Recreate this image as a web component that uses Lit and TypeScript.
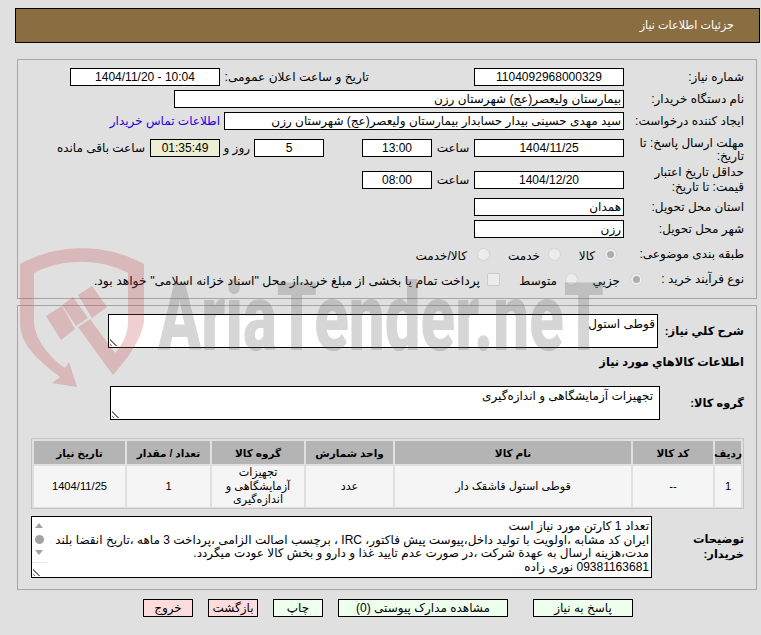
import { LitElement, html, css } from "lit";
import { customElement } from "lit/decorators.js";

const cols = [
  { t: "ردیف", v: html`1` },
  { t: "کد کالا", v: html`--` },
  { t: "نام کالا", v: html`قوطی استول قاشقک دار` },
  { t: "واحد شمارش", v: html`عدد` },
  { t: "گروه کالا", v: html`تجهیزات<br />آزمایشگاهی و<br />اندازه‌گیری` },
  { t: "تعداد / مقدار", v: html`1` },
  { t: "تاریخ نیاز", v: html`1404/11/25` },
];

@customElement("app-root")
export class AppRoot extends LitElement {
  static styles = css`
    :host {
      display: block;
      position: relative;
      width: 761px;
      height: 635px;
      overflow: hidden;
      background: #e0e0e0;
      font-family: "Liberation Sans", "DejaVu Sans", Tahoma, sans-serif;
      font-size: 12px;
      color: #000;
    }
    .page {
      direction: rtl;
      display: flex;
      flex-direction: column;
      padding: 8px 1px 0 15px;
    }
    .header {
      height: 33px;
      border: 1px solid #000;
      background: #8b6d42;
      color: #fff;
      display: flex;
      align-items: center;
      padding-right: 25px;
      font-size: 11.2px;
    }
    .panel {
      border: 1px solid #a6a6a6;
      margin: 0 3px 0 2px;
      padding: 8px 12px 0 0;
      box-sizing: border-box;
    }
    .p1 { margin-top: 16px; height: 240px; }
    .p2 { margin-top: 6px; height: 285px; }
    .row { display: flex; align-items: center; height: 18px; margin-bottom: 4px; }
    .lab { width: 120px; flex: none; line-height: 15px; white-space: nowrap; }
    .box {
      box-sizing: border-box;
      height: 18px;
      border: 1px solid #000;
      background: #fff;
      display: flex;
      align-items: center;
      padding: 0 2px;
      flex: none;
    }
    .c { justify-content: center; }
    .w150 { width: 150px; }
    .w70 { width: 70px; }
    .w450 { width: 450px; }
    .w400 { width: 400px; }
    .txt { white-space: nowrap; flex: none; }
    .pub-lab { width: 145px; margin: 0 105px 0 4px; font-size: 12.2px; }
    .ltr { direction: ltr; }
    .link { color: #2200dd; margin-right: 4px; white-space: nowrap; }
    .timer { background: #eeeed2; }
    .hour { width: 42px; text-align: center; }
    .gap38 { width: 38px; flex: none; }
    .days { width: 30px; margin-right: 4px; }
    .remain { margin-right: 5px; }
    .r4 { margin-top: 9px; margin-bottom: 14px; }
    .r4 .lab { line-height: 13px; margin-top: 3px; }
    .r5 { margin-bottom: 9px; }
    .r8 { margin-top: 7px; margin-bottom: 7px; }
    .opt { display: flex; align-items: center; flex: none; white-space: nowrap; }
    .opt span + span { margin-top: 3px; }
    .o8a { width: 56px; margin-right: 7px; }
    .o8b { width: 71px; }
    .o9a { width: 65px; margin-right: -19px; }
    .o9b { width: 78px; }
    .g7 { margin-right: 7px; font-size: 12.4px; }
    .g8 { margin-right: 8px; }
    .g9 { margin-right: 9px; }
    .g10 { margin-right: 10px; }
    .radio {
      flex: none;
      width: 13px;
      height: 13px;
      border-radius: 50%;
      box-sizing: border-box;
      border: 1px solid #d4d4d4;
      background: #ececec;
      display: flex;
      align-items: center;
      justify-content: center;
    }
    .radio.on::after {
      content: "";
      width: 7px;
      height: 7px;
      border-radius: 50%;
      background: #adadad;
    }
    .check {
      flex: none;
      width: 13px;
      height: 13px;
      box-sizing: border-box;
      border: 1px solid #cbcbcb;
      background: #ececec;
      border-radius: 2px;
    }
    .ta {
      box-sizing: border-box;
      border: 1px solid #000;
      background: #fff;
      position: relative;
      padding: 2px;
      width: 550px;
      height: 34px;
      flex: none;
    }
    .ta2 { padding-right: 6px; }
    .grip {
      position: absolute;
      left: 1px;
      bottom: 1px;
      width: 8px;
      height: 8px;
      background: repeating-linear-gradient(45deg, #fff 0 1px, #777 1px 2px, #fff 2px 3px);
      clip-path: polygon(0 0, 100% 100%, 0 100%);
    }
    .b { font-weight: bold; font-size: 11.4px; }
    .heading { height: 16px; display: flex; align-items: center; margin-bottom: 16px; }
    .tr1 { height: 34px; margin-bottom: 6px; }
    .tr1 .lab { width: 86px; }
    .tr2 { height: 34px; margin-bottom: 18px; }
    .tr2 .lab { width: 84px; }
    .tr3 { height: 62px; margin-top: 7px; margin-bottom: 0; }
    .tr3 .lab { width: 92px; }
    .table {
      box-sizing: border-box;
      width: 713px;
      height: 71px;
      border: 1px solid #c4c4c4;
      padding: 2px;
      display: grid;
      grid-template-columns: 26px 80px 236px 87px 92px 83px 91px;
      grid-template-rows: 23px 41px;
      gap: 2px;
    }
    .th {
      background: #b4b4b4;
      font-weight: bold;
      display: flex;
      align-items: center;
      justify-content: center;
      white-space: nowrap;
      font-size: 10.5px;
    }
    .td {
      background: #f5f5f5;
      display: flex;
      align-items: center;
      justify-content: center;
      text-align: center;
      line-height: 13.4px;
      font-size: 11.2px;
    }
    .desc {
      width: 621px;
      height: 62px;
      line-height: 13.6px;
      padding: 3px 2px 0 15px;
      white-space: nowrap;
      overflow: hidden;
      font-size: 12px;
    }
    .sb {
      position: absolute;
      left: 0;
      top: 0;
      bottom: 0;
      width: 15px;
      background: #fff;
    }
    .up, .dn {
      position: absolute;
      left: 3px;
      width: 0;
      height: 0;
      border-left: 4.5px solid transparent;
      border-right: 4.5px solid transparent;
    }
    .up { top: 6px; border-bottom: 5px solid #a3a3a3; }
    .dn { top: 33px; border-top: 5px solid #a3a3a3; }
    .thumb {
      position: absolute;
      left: 3px;
      top: 18px;
      width: 9px;
      height: 9px;
      border-radius: 50%;
      background: #a3a3a3;
    }
    .sb-line { position: absolute; left: 0; right: 0; top: 45px; border-top: 1px solid #e6e6e6; }
    .buttons {
      display: flex;
      gap: 15px;
      margin-top: 9px;
      margin-right: 127px;
    }
    .btn {
      box-sizing: border-box;
      height: 18px;
      border: 1px solid #000;
      background: #eeffee;
      display: flex;
      align-items: center;
      justify-content: center;
      white-space: nowrap;
      flex: none;
      width: 50px;
    }
    .reply { width: 100px; margin-left: 10px; }
    .docs { width: 170px; }
    .red { background: #ffdcdc; }
    .wm {
      position: absolute;
      left: 0;
      top: 0;
      width: 761px;
      height: 635px;
      pointer-events: none;
    }
    .wm svg { position: absolute; left: 0; top: 0; }
    .shield { fill: rgba(193, 70, 70, 0.26); }
    .wm-text {
      position: absolute;
      left: 158px;
      top: 263px;
      font-family: "Roboto", sans-serif;
      font-weight: 900;
      font-size: 94px;
      line-height: 110px;
      color: rgba(90, 90, 90, 0.25);
      white-space: nowrap;
      direction: ltr;
      transform-origin: left top;
      transform: scaleX(0.677);
    }
  `;

  render() {
    return html`
      <div class="page">
        <div class="header">جزئیات اطلاعات نیاز</div>

        <div class="panel p1">
          <div class="row">
            <div class="lab">شماره نیاز:</div>
            <div class="box c w150">1104092968000329</div>
            <div class="txt pub-lab">تاریخ و ساعت اعلان عمومی:</div>
            <div class="box c w150"><span class="ltr">1404/11/20 - 10:04</span></div>
          </div>
          <div class="row">
            <div class="lab">نام دستگاه خریدار:</div>
            <div class="box w450">بیمارستان ولیعصر(عج) شهرستان رزن</div>
          </div>
          <div class="row">
            <div class="lab">ایجاد کننده درخواست:</div>
            <div class="box w400">سید مهدی حسینی بیدار حسابدار بیمارستان ولیعصر(عج) شهرستان رزن</div>
            <div class="link">اطلاعات تماس خریدار</div>
          </div>
          <div class="row r4">
            <div class="lab">مهلت ارسال پاسخ: تا<br />تاریخ:</div>
            <div class="box c w150">1404/11/25</div>
            <div class="txt hour">ساعت</div>
            <div class="box c w70">13:00</div>
            <div class="gap38"></div>
            <div class="box c w70">5</div>
            <div class="txt days">روز و</div>
            <div class="box c w70 timer">01:35:49</div>
            <div class="txt remain">ساعت باقی مانده</div>
          </div>
          <div class="row r5">
            <div class="lab">حداقل تاریخ اعتبار<br />قیمت: تا تاریخ:</div>
            <div class="box c w150">1404/12/20</div>
            <div class="txt hour">ساعت</div>
            <div class="box c w70">08:00</div>
          </div>
          <div class="row">
            <div class="lab">استان محل تحویل:</div>
            <div class="box w150">همدان</div>
          </div>
          <div class="row">
            <div class="lab">شهر محل تحویل:</div>
            <div class="box w150">رزن</div>
          </div>
          <div class="row r8">
            <div class="lab">طبقه بندی موضوعی:</div>
            <div class="opt o8a"><span class="radio on"></span><span class="g9">کالا</span></div>
            <div class="opt o8b"><span class="radio"></span><span class="g8">خدمت</span></div>
            <div class="opt"><span class="radio"></span><span class="g10">کالا/خدمت</span></div>
          </div>
          <div class="row">
            <div class="lab">نوع فرآیند خرید :</div>
            <div class="opt o9a"><span class="radio on"></span><span class="g10">جزیي</span></div>
            <div class="opt o9b"><span class="radio"></span><span class="g8">متوسط</span></div>
            <div class="opt"><span class="check"></span><span class="g7">پرداخت تمام یا بخشی از مبلغ خرید،از محل "اسناد خزانه اسلامی" خواهد بود.</span></div>
          </div>
        </div>

        <div class="panel p2">
          <div class="row tr1">
            <div class="lab b">شرح کلي نياز:</div>
            <div class="ta">قوطی استول<span class="grip"></span></div>
          </div>
          <div class="heading b">اطلاعات کالاهاي مورد نياز</div>
          <div class="row tr2">
            <div class="lab b">گروه کالا:</div>
            <div class="ta ta2">تجهیزات آزمایشگاهی و اندازه‌گیری<span class="grip"></span></div>
          </div>
          <div class="table">
            ${cols.map((c) => html`<div class="th">${c.t}</div>`)}
            ${cols.map((c) => html`<div class="td"><div>${c.v}</div></div>`)}
          </div>
          <div class="row tr3">
            <div class="lab b">توضیحات<br />خریدار:</div>
            <div class="ta desc">
              <div>تعداد 1 کارتن مورد نیاز است</div>
              <div>ایران کد مشابه ،اولویت با تولید داخل،پیوست پیش فاکتور، IRC ، برچسب اصالت الزامی ،پرداخت 3 ماهه ،تاریخ انقضا بلند</div>
              <div>مدت،هزینه ارسال به عهدة شرکت ،در صورت عدم تایید غذا و دارو و بخش کالا عودت میگردد.</div>
              <div>09381163681 نوری زاده</div>
              <div class="sb"><span class="up"></span><span class="thumb"></span><span class="dn"></span><span class="sb-line"></span></div>
              <span class="grip"></span>
            </div>
          </div>
        </div>

        <div class="buttons">
          <div class="btn reply">پاسخ به نیاز</div>
          <div class="btn docs">مشاهده مدارک پیوستی (0)</div>
          <div class="btn">چاپ</div>
          <div class="btn red">بازگشت</div>
          <div class="btn red">خروج</div>
        </div>
      </div>

      <div class="wm">
        <svg width="761" height="635" viewBox="0 0 761 635">
          <path class="shield" d="M20 264 C58 243 106 243 144 264 L144 322 C141 340 128 358 113 375 L78 327 L90 319 L115 353 C122 345 128 335 128 322 L128 273 C100 258 62 258 34 273 L34 322 C35 340 50 358 65 368 L69 362 L77 387 L52 383 L60 377 C38 360 20 345 20 322 Z"/>
          <path class="shield" d="M46 316 L62 306 L75 329 L61 340 Z M62 305 L73 297 L88 318 L76 326 Z M78 295 L92 286 L107 307 L92 318 Z"/>
        </svg>
        <div class="wm-text">AriaTender.neT</div>
      </div>
    `;
  }
}
